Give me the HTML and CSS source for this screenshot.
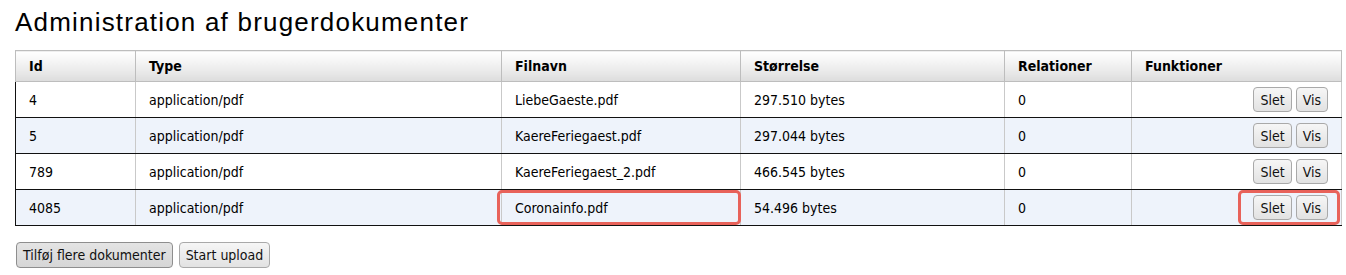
FILE: index.html
```html
<!DOCTYPE html>
<html lang="da">
<head>
    <meta charset="UTF-8">
    <title>Administration af brugerdokumenter</title>
    <link rel="stylesheet" href="styles.css">
</head>
<body>
    <h1>Administration af brugerdokumenter</h1>

    <table class="docs">
        <colgroup>
            <col style="width: 120px">
            <col style="width: 366px">
            <col style="width: 239px">
            <col style="width: 264px">
            <col style="width: 127px">
            <col style="width: 210px">
        </colgroup>
        <thead>
            <tr>
                <th>Id</th>
                <th>Type</th>
                <th>Filnavn</th>
                <th>Størrelse</th>
                <th>Relationer</th>
                <th>Funktioner</th>
            </tr>
        </thead>
        <tbody>
            <tr>
                <td>4</td>
                <td>application/pdf</td>
                <td>LiebeGaeste.pdf</td>
                <td>297.510 bytes</td>
                <td>0</td>
                <td class="actions"><button>Slet</button><button>Vis</button></td>
            </tr>
            <tr class="alt">
                <td>5</td>
                <td>application/pdf</td>
                <td>KaereFeriegaest.pdf</td>
                <td>297.044 bytes</td>
                <td>0</td>
                <td class="actions"><button>Slet</button><button>Vis</button></td>
            </tr>
            <tr>
                <td>789</td>
                <td>application/pdf</td>
                <td>KaereFeriegaest_2.pdf</td>
                <td>466.545 bytes</td>
                <td>0</td>
                <td class="actions"><button>Slet</button><button>Vis</button></td>
            </tr>
            <tr class="alt">
                <td>4085</td>
                <td>application/pdf</td>
                <td class="marked"><span class="mark name-mark"></span>Coronainfo.pdf</td>
                <td>54.496 bytes</td>
                <td>0</td>
                <td class="actions marked"><span class="mark btn-mark"></span><button>Slet</button><button>Vis</button></td>
            </tr>
        </tbody>
    </table>

    <div class="upload">
        <button class="pressed">Tilføj flere dokumenter</button>
        <button>Start upload</button>
    </div>
</body>
</html>
```

FILE: styles.css
```css
body {
    margin: 0;
    padding: 0 15px;
    background: #fff;
    color: #000;
    font-family: 'DejaVu Sans Condensed', 'DejaVu Sans', sans-serif;
    font-size: 14px;
}
h1 {
    margin: 0;
    padding-top: 7px;
    height: 50px;
    box-sizing: border-box;
    font-family: 'Liberation Sans', Arial, sans-serif;
    font-weight: normal;
    font-size: 26px;
    letter-spacing: 1.2px;
    line-height: 30px;
}
.docs {
    border-collapse: collapse;
    table-layout: fixed;
    width: 1326px;
}
.docs th {
    height: 30px;
    padding: 0 13px;
    text-align: left;
    font-weight: bold;
    font-size: 14px;
    background: linear-gradient(#ffffff, #ececec 60%, #dcdcdc);
    border: 1px solid #bdbdbd;
}
.docs td {
    height: 35px;
    padding: 0 13px;
    border-left: 1px solid #c9c9c9;
    border-right: 1px solid #c9c9c9;
    border-bottom: 1px solid #111;
}
.docs td:first-child {
    border-left-color: #111;
}
.docs tr.alt td {
    background: #eef3fb;
}
.docs td.actions {
    text-align: right;
    padding-right: 13px;
}
.docs td.marked {
    position: relative;
}
.mark {
    position: absolute;
    border: 3px solid #e8625a;
    border-radius: 5px;
    box-sizing: border-box;
}
.name-mark {
    left: -5px;
    right: -1px;
    top: 0;
    bottom: 0;
}
.btn-mark {
    left: 106px;
    right: 1px;
    top: 0;
    bottom: 0;
}
button {
    font-family: 'DejaVu Sans Condensed', 'DejaVu Sans', sans-serif;
    font-size: 14px;
    color: #111;
    height: 25px;
    padding: 0 6px;
    margin-left: 4px;
    border: 1px solid #a9a9a9;
    border-radius: 4px;
    background: linear-gradient(#f6f6f6, #e2e2e2);
}
.upload {
    margin-top: 16px;
}
.upload button {
    margin: 0 1px 0 1px;
    height: 26px;
}
.upload button.pressed {
    background: linear-gradient(#e4e4e4, #d6d6d6);
    border-color: #8e8e8e;
}
```
